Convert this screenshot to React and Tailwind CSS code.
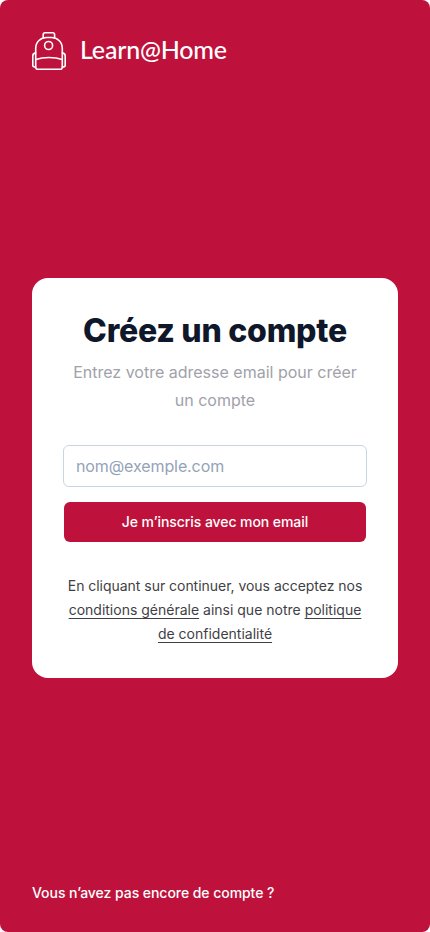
function Backpack() {
  return (
    <svg className="h-[38px] w-[34px] shrink-0" viewBox="0 0 34 38" fill="none" stroke="white" strokeWidth="1.6" strokeLinejoin="round" strokeLinecap="round">
      <path d="M11.2 5.900V2.700C11.2 1.500 12 .8 13 .8h7.800c1 0 1.800.7 1.800 1.900v3.200" />
      <path d="M3.700 35.200V16.500C3.700 9.800 8.800 5.500 14.500 5.500h5C25.200 5.500 30.300 9.800 30.300 16.500v18.700c0 1.200-.8 2-2 2H5.700c-1.200 0-2-.8-2-2Z" />
      <path d="M3.700 27.600C11.500 24.800 22.500 24.800 30.300 27.600" />
      <circle cx="16.600" cy="13.500" r="4" />
      <path d="M3.700 20.900C1.700 21.100.8 22.300.8 24v9.500c0 1 .7 1.500 2.900 1.500M30.300 20.900c2 .2 2.900 1.400 2.900 3.100v9.500c0 1-.7 1.500-2.900 1.500" />
    </svg>
  );
}

function Header() {
  return (
    <header className="flex h-[38px] items-center gap-3.5 text-white">
      <Backpack />
      <span className="-mt-[4px] whitespace-nowrap font-['Lato','Open_Sans',sans-serif] text-[25px] leading-[38px] font-medium tracking-[-0.2px]">Learn@Home</span>
    </header>
  );
}

function SignUpCard() {
  return (
    <main className="flex h-[400px] flex-col rounded-2xl bg-white px-8 pt-[33px] text-center">
      <h1 className="text-[32px] leading-10 font-extrabold tracking-[-0.24px] text-[#0f172a]">Créez un compte</h1>
      <p className="mt-[7px] text-base leading-7 text-[#a1a1aa]">
        Entrez votre adresse email pour créer
        <br />
        un compte
      </p>
      <form className="mt-[31px] flex flex-col" onSubmit={(e) => e.preventDefault()}>
        <input
          type="email"
          aria-label="Email"
          placeholder="nom@exemple.com"
          className="-mx-px h-[42px] rounded-md border border-[#cbd5e1] px-3 text-base leading-6 tracking-[-0.1px] outline-none placeholder:text-[#94a3b8]"
        />
        <button className="mt-[15px] h-10 rounded-md bg-[#be123c] text-sm leading-6 font-medium tracking-[-0.07px] text-white">Je m’inscris avec mon email</button>
      </form>
      <p className="-mx-2 mt-8 text-sm leading-6 text-[#3f3f46]">
        <span className="tracking-[-0.03px]">En cliquant sur continuer, vous acceptez nos</span>
        <br />
        <a className="underline underline-offset-[3px]">conditions générale</a> ainsi que notre{" "}
        <a className="underline underline-offset-[3px]">
          politique
          <br />
          de confidentialité
        </a>
      </p>
    </main>
  );
}

export default function App() {
  return (
    <div className="flex h-[932px] w-[430px] flex-col justify-between rounded-lg bg-[#be123c] px-8 pt-8 pb-[27px] font-['Inter',sans-serif]">
      <div className="flex flex-col gap-[208px]">
        <Header />
        <SignUpCard />
      </div>
      <footer className="text-sm leading-6 font-medium tracking-[-0.05px] text-white">Vous n’avez pas encore de compte ?</footer>
    </div>
  );
}
